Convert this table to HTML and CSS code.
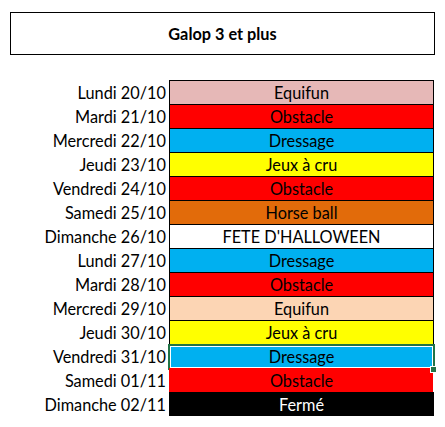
FILE: index.html
```html
<!DOCTYPE html>
<html lang="fr">
<head>
<meta charset="utf-8">
<link rel="stylesheet" href="styles.css">
</head>
<body>
<div class="title">Galop 3 et plus</div>
<div class="sheet">
  <div class="label">Lundi 20/10</div><div class="cell pink">Equifun</div>
  <div class="label">Mardi 21/10</div><div class="cell red">Obstacle</div>
  <div class="label">Mercredi 22/10</div><div class="cell blue">Dressage</div>
  <div class="label">Jeudi 23/10</div><div class="cell yellow">Jeux à cru</div>
  <div class="label">Vendredi 24/10</div><div class="cell red">Obstacle</div>
  <div class="label">Samedi 25/10</div><div class="cell orange">Horse ball</div>
  <div class="label">Dimanche 26/10</div><div class="cell white">FETE D'HALLOWEEN</div>
  <div class="label">Lundi 27/10</div><div class="cell blue">Dressage</div>
  <div class="label">Mardi 28/10</div><div class="cell red">Obstacle</div>
  <div class="label">Mercredi 29/10</div><div class="cell peach">Equifun</div>
  <div class="label">Jeudi 30/10</div><div class="cell yellow">Jeux à cru</div>
  <div class="label">Vendredi 31/10</div><div class="cell blue selected">Dressage</div>
  <div class="label">Samedi 01/11</div><div class="cell red noborder">Obstacle</div>
  <div class="label">Dimanche 02/11</div><div class="cell black noborder">Fermé</div>
</div>
</body>
</html>
```
FILE: styles.css
```css
html, body {
  margin: 0;
  padding: 0;
  background: #fff;
}
body {
  font-family: Lato, "Liberation Sans", sans-serif;
  font-size: 16.3px;
  color: #000;
}
.title {
  box-sizing: border-box;
  margin: 12px 0 0 10px;
  width: 425px;
  height: 43px;
  border: 1px solid #000;
  display: flex;
  align-items: center;
  justify-content: center;
  font-weight: bold;
}
.sheet {
  margin-top: 25px;
  display: grid;
  grid-template-columns: 169px 265px;
  grid-auto-rows: 24px;
}
.label {
  text-align: right;
  padding-right: 3px;
  display: flex;
  align-items: center;
  justify-content: flex-end;
}
.cell {
  position: relative;
  box-sizing: border-box;
  border: 1px solid #000;
  border-bottom: none;
  display: flex;
  align-items: center;
  justify-content: center;
}
.pink { background: #e6b8b7; }
.red { background: #ff0000; }
.blue { background: #00b0f0; }
.yellow { background: #ffff00; }
.orange { background: #e26b0a; }
.white { background: #fff; }
.peach { background: #fcd5b4; }
.black { background: #000; color: #fff; }
.noborder { border-color: transparent; }
.red.noborder { border-color: #ff0000; border-right-color: #fff; }
.black.noborder { border-color: #000; }
.selected::after {
  content: "";
  position: absolute;
  left: -2px;
  top: -1px;
  right: -2px;
  bottom: -2px;
  border: 2px solid #217346;
  box-shadow: inset 0 0 0 1px #fff;
}
.selected::before {
  content: "";
  position: absolute;
  right: -3px;
  bottom: -4px;
  width: 5px;
  height: 5px;
  background: #217346;
  box-shadow: 0 0 0 1px #fff;
  z-index: 2;
}
```
